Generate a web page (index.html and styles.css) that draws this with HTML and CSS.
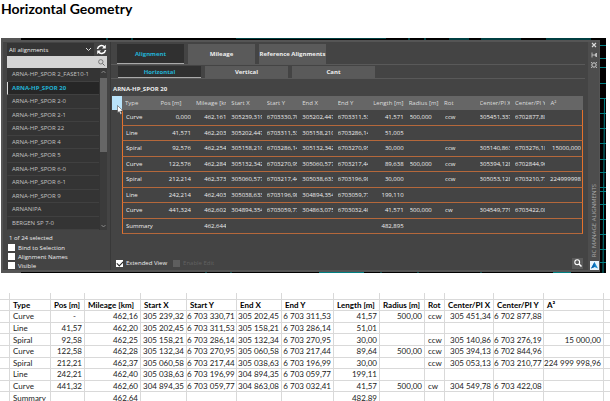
FILE: index.html
```html
<!DOCTYPE html>
<html lang="en">
<head>
<meta charset="utf-8">
<title>Horizontal Geometry</title>
<link rel="stylesheet" href="styles.css">
</head>
<body>
<h1>Horizontal Geometry</h1>
<section class="scene">
  <svg class="drawing" aria-hidden="true">
    <rect width="20" height="100%" fill="#555"/>
    <g stroke="#007f82" fill="none">
      <path d="M106 0v2M131 0v2M235 0h150M408 0v2M424 0v2M448 1h20M480 1h40M545 1h45"/>
      <path d="M205 233.500v2M230 233.500v2M318 234.500h45M380 233v2M417 233v2M480 233v2M552 234.500h18"/>
    </g>
    <svg x="100%" overflow="visible"><g stroke="#007f82"><path d="M-6 7.500h6M-6 20.500h6M-6 29.500h6M-6 45.500h6M-6 60.500h6M-6 75.500h6M-6 90.500h6M-6 105.500h6M-6 121.500h6M-6 134.500h6M-6 149.500h6M-6 153.500h6M-6 166.500h6M-6 181.500h6M-6 196.500h6M-6 211.500h6M-6 224.500h6M-1.500 60L-3 235"/></g></svg>
  </svg>
  <div class="palette">
    <aside class="side">
      <div class="picker">
        <label class="combo"><select aria-label="Alignment filter"><option>All alignments</option></select>
          <svg width="7" height="5" viewBox="0 0 7 5"><path d="M1 1l2.500 2.500L6 1" fill="none" stroke="#ddd"/></svg></label>
        <button class="icon" aria-label="Refresh"><svg width="11" height="11" viewBox="0 0 11 11"><path d="M1.500 5A4 4 0 0 1 8.500 3M9.500 6A4 4 0 0 1 2.500 8" fill="none" stroke="#fff" stroke-width="1.600"/><path d="M9.800 .8v3.700H6zM1.200 10.200V6.500H5z" fill="#fff"/></svg></button>
      </div>
      <label class="search"><input type="text" aria-label="Search alignments">
        <svg width="7" height="7" viewBox="0 0 7 7"><circle cx="2.800" cy="2.800" r="2.200" fill="none" stroke="#666" stroke-width=".8"/><path d="M4.500 4.500L6.600 6.600" stroke="#666"/></svg></label>
      <div class="listbox">
        <ul class="list">
          <li>ARNA-HP_SPOR 2_FASE10-1</li><li class="selected">ARNA-HP_SPOR 20</li><li>ARNA-HP_SPOR 2-0</li><li>ARNA-HP_SPOR 2-1</li><li>ARNA-HP_SPOR 22</li><li>ARNA-HP_SPOR 4</li><li>ARNA-HP_SPOR 5</li><li>ARNA-HP_SPOR 6-0</li><li>ARNA-HP_SPOR 6-1</li><li>ARNA-HP_SPOR 9</li><li>ARNANIPA</li><li>BERGEN SP 7-0</li>
        </ul>
        <div class="scroll">
          <svg width="5" height="4" viewBox="0 0 5 4"><path d="M.5 3l2-2 2 2" fill="none" stroke="#999" stroke-width=".8"/></svg>
          <div class="thumb"></div>
          <svg width="5" height="4" viewBox="0 0 5 4"><path d="M.5 1l2 2 2-2" fill="none" stroke="#999" stroke-width=".8"/></svg>
        </div>
      </div>
      <p class="count">1 of 24 selected</p>
      <div class="options">
        <label class="check"><input type="checkbox">Bind to Selection</label>
        <label class="check"><input type="checkbox">Alignment Names</label>
        <label class="check"><input type="checkbox">Visible</label>
      </div>
    </aside>
    <main class="main">
      <nav class="tabs"><button class="on">Alignment</button><button>Mileage</button><button>Reference Alignments</button></nav>
      <nav class="tabs sub"><button class="on">Horizontal</button><button>Vertical</button><button>Cant</button></nav>
      <h2>ARNA-HP_SPOR 20</h2>
      <div class="gridwrap">
        <div class="corner"><svg class="cursor" width="7" height="10" viewBox="0 0 7 10"><path d="M.5 .5v7.500l1.700-1.600 1.300 3 1.300-.6-1.200-2.800h2.500z" fill="#fff" stroke="#333" stroke-width=".5"/></svg></div>
        <table class="elements">
          <thead><tr><th>Type</th><th>Pos [m]</th><th>Mileage [km]</th><th>Start X</th><th>Start Y</th><th>End X</th><th>End Y</th><th>Length [m]</th><th>Radius [m]</th><th>Rot</th><th>Center/PI X</th><th>Center/PI Y</th><th>A²</th></tr></thead>
          <tbody>
            <tr><td>Curve</td><td>0,000</td><td>462,161</td><td>305239,319</td><td>6703330,705</td><td>305202,447</td><td>6703311,532</td><td>41,571</td><td>500,000</td><td>ccw</td><td>305451,337</td><td>6702877,882</td><td></td></tr>
            <tr><td>Line</td><td>41,571</td><td>462,203</td><td>305202,447</td><td>6703311,532</td><td>305158,210</td><td>6703286,143</td><td>51,005</td><td></td><td></td><td></td><td></td><td></td></tr>
            <tr><td>Spiral</td><td>92,576</td><td>462,254</td><td>305158,210</td><td>6703286,143</td><td>305132,342</td><td>6703270,951</td><td>30,000</td><td></td><td>ccw</td><td>305140,863</td><td>6703276,187</td><td>15000,000</td></tr>
            <tr><td>Curve</td><td>122,576</td><td>462,284</td><td>305132,342</td><td>6703270,951</td><td>305060,577</td><td>6703217,443</td><td>89,638</td><td>500,000</td><td>ccw</td><td>305394,128</td><td>6702844,962</td><td></td></tr>
            <tr><td>Spiral</td><td>212,214</td><td>462,373</td><td>305060,577</td><td>6703217,443</td><td>305038,633</td><td>6703196,988</td><td>30,000</td><td></td><td>ccw</td><td>305053,128</td><td>6703210,772</td><td>224999998</td></tr>
            <tr><td>Line</td><td>242,214</td><td>462,403</td><td>305038,633</td><td>6703196,988</td><td>304894,354</td><td>6703059,772</td><td>199,110</td><td></td><td></td><td></td><td></td><td></td></tr>
            <tr><td>Curve</td><td>441,324</td><td>462,602</td><td>304894,354</td><td>6703059,772</td><td>304863,075</td><td>6703032,406</td><td>41,571</td><td>500,000</td><td>cw</td><td>304549,779</td><td>6703422,084</td><td></td></tr>
            <tr><td>Summary</td><td></td><td>462,644</td><td></td><td></td><td></td><td></td><td>482,895</td><td></td><td></td><td></td><td></td><td></td></tr>
          </tbody>
        </table>
      </div>
      <footer>
        <label class="check"><input type="checkbox" checked>Extended View</label>
        <label class="check off"><input type="checkbox" disabled>Enable Edit</label>
        <button class="icon find" aria-label="Find"><svg width="8" height="8" viewBox="0 0 8 8"><circle cx="3.200" cy="3.200" r="2.400" fill="none" stroke="#fff" stroke-width="1.100"/><path d="M5 5l2.500 2.500" stroke="#fff" stroke-width="1.500"/></svg></button>
      </footer>
    </main>
    <div class="rail">
      <button class="icon" aria-label="Close"><svg width="6" height="6" viewBox="0 0 6 6"><path d="M1 1l4 4M5 1L1 5" stroke="#ddd" stroke-width="1.100"/></svg></button>
      <button class="icon" aria-label="Auto-hide"><svg width="6" height="6" viewBox="0 0 6 6"><path d="M1 .5v5M1 3h2M5.500 1v4L3.500 3z" stroke="#ccc" stroke-width=".8" fill="#ccc"/></svg></button>
      <button class="icon" aria-label="Properties"><svg width="6" height="6" viewBox="0 0 6 6"><path d="M1.200 1.200h3.600v3.600H1.200zM0 0l1.200 1.200M6 0L4.800 1.200M0 6l1.200-1.200M6 6L4.800 4.800M0 3h1M5 3h1M3 0v1M3 5v1" fill="none" stroke="#ccc" stroke-width=".8"/></svg></button>
      <span class="caption">RC MANAGE ALIGNMENTS</span>
      <svg width="9" height="9" viewBox="0 0 9 9"><path d="M0 0h9v9H0z" fill="#e8f5fc"/><path d="M4.500 1L8 7.500 4.500 6 1 7.500z" fill="#138bd0"/><path d="M4.500 1v5L1 7.500z" fill="#0a62ac"/></svg>
    </div>
  </div>
</section>
<table class="sheet">
  <colgroup><col class="w9"><col class="w41"><col class="w34"><col class="w56"><col class="w46"><col class="w50"><col class="w45"><col class="w52"><col class="w46"><col class="w45"><col class="w20"><col class="w49"><col class="w50"><col class="w60"><col class="w7"></colgroup>
  <thead>
    <tr class="blank"><td></td><td></td><td></td><td></td><td></td><td></td><td></td><td></td><td></td><td></td><td></td><td></td><td></td><td></td><td></td></tr>
    <tr><td></td><th>Type</th><th>Pos [m]</th><th>Mileage [km]</th><th>Start X</th><th>Start Y</th><th>End X</th><th>End Y</th><th>Length [m]</th><th>Radius [m]</th><th>Rot</th><th>Center/PI X</th><th>Center/PI Y</th><th>A²</th><td></td></tr>
  </thead>
  <tbody>
    <tr><td></td><td>Curve</td><td class="dash">-</td><td>462,16</td><td>305 239,32</td><td>6 703 330,71</td><td>305 202,45</td><td>6 703 311,53</td><td>41,57</td><td>500,00</td><td>ccw</td><td>305 451,34</td><td>6 702 877,88</td><td></td><td></td></tr>
    <tr><td></td><td>Line</td><td>41,57</td><td>462,20</td><td>305 202,45</td><td>6 703 311,53</td><td>305 158,21</td><td>6 703 286,14</td><td>51,01</td><td></td><td></td><td></td><td></td><td></td><td></td></tr>
    <tr><td></td><td>Spiral</td><td>92,58</td><td>462,25</td><td>305 158,21</td><td>6 703 286,14</td><td>305 132,34</td><td>6 703 270,95</td><td>30,00</td><td></td><td>ccw</td><td>305 140,86</td><td>6 703 276,19</td><td>15 000,00</td><td></td></tr>
    <tr><td></td><td>Curve</td><td>122,58</td><td>462,28</td><td>305 132,34</td><td>6 703 270,95</td><td>305 060,58</td><td>6 703 217,44</td><td>89,64</td><td>500,00</td><td>ccw</td><td>305 394,13</td><td>6 702 844,96</td><td></td><td></td></tr>
    <tr><td></td><td>Spiral</td><td>212,21</td><td>462,37</td><td>305 060,58</td><td>6 703 217,44</td><td>305 038,63</td><td>6 703 196,99</td><td>30,00</td><td></td><td>ccw</td><td>305 053,13</td><td>6 703 210,77</td><td>224 999 998,96</td><td></td></tr>
    <tr><td></td><td>Line</td><td>242,21</td><td>462,40</td><td>305 038,63</td><td>6 703 196,99</td><td>304 894,35</td><td>6 703 059,77</td><td>199,11</td><td></td><td></td><td></td><td></td><td></td><td></td></tr>
    <tr><td></td><td>Curve</td><td>441,32</td><td>462,60</td><td>304 894,35</td><td>6 703 059,77</td><td>304 863,08</td><td>6 703 032,41</td><td>41,57</td><td>500,00</td><td>cw</td><td>304 549,78</td><td>6 703 422,08</td><td></td><td></td></tr>
    <tr><td></td><td>Summary</td><td></td><td>462,64</td><td></td><td></td><td></td><td></td><td>482,89</td><td></td><td></td><td></td><td></td><td></td><td></td></tr>
  </tbody>
</table>
</body>
</html>
```
FILE: styles.css
```css
* { box-sizing: border-box; }
html { overflow: hidden; }
body { margin: 0; background: #fff; font-family: Lato, "Liberation Sans", sans-serif; }
h1 { margin: 0; padding: 0 1px; font-size: 14px; line-height: 18px; font-weight: 700; color: #000; }
ul, p, h2 { margin: 0; padding: 0; list-style: none; }
button, input, select { font: inherit; color: inherit; margin: 0; padding: 0; border: 0; border-radius: 0; }
svg { display: block; flex: none; }

.scene {
  position: relative; margin: 20px 4px 0 1px; padding: 2px 6px 1px 0; background: #000;
  font-family: "Open Sans", "Noto Sans", sans-serif; font-size: 6px; line-height: 8px; color: #eee;
}
.drawing { position: absolute; inset: 0; width: 100%; height: 100%; }
.palette {
  position: relative; display: grid; grid-template-columns: 104px 1fr 11px; column-gap: 3px;
  background: #444; border: 2px solid #555; border-width: 2px 1px 2px 2px; height: 232px;
}

.side { padding: 1px 0 0 4px; display: flex; flex-direction: column; }
.picker { display: flex; height: 13px; gap: 2px; align-items: center; }
.combo { position: relative; flex: 1; display: flex; align-items: center; background: #353535; height: 13px; }
.combo select { appearance: none; width: 100%; background: transparent; padding-left: 2px; }
.combo svg { position: absolute; right: 2px; }
.icon { display: grid; place-items: center; background: transparent; }
.search { display: flex; align-items: center; height: 12px; background: #d4d4d4; padding-right: 2px; }
.search input { flex: 1; min-width: 0; background: transparent; color: #222; }
.listbox { display: grid; grid-template-columns: 1fr 7px; column-gap: 1px; height: 162px; background: #343434; }
.list { display: grid; grid-template-rows: repeat(12, 1fr); color: #c2c2c2; }
.list li { display: flex; align-items: center; padding-left: 4px; border-left: 1px solid transparent; border-bottom: 1px solid #404040; white-space: nowrap; }
.list .selected { background: #262626; border-left-color: #ddd; color: #22b2d4; font-weight: 700; }
.scroll { display: flex; flex-direction: column; align-items: center; gap: 4px; padding: 2px 0; background: #3b3b3b; }
.thumb { width: 7px; height: 74px; background: #666; margin-bottom: auto; }
.count { padding: 4px 2px 0; line-height: 8px; }
.options { padding: 1px 0 0 1px; }
.check { display: flex; align-items: center; gap: 3px; height: 9px; white-space: nowrap; }
.check input { appearance: none; width: 7px; height: 7px; background: #fff; display: grid; place-items: center; }
.check input:checked::before { content: ""; width: 5px; height: 3px; border: solid #222; border-width: 0 0 1px 1px; transform: rotate(-45deg); }
.check.off { color: #626262; }
.check.off input { background: #5e5e5e; }

.main { display: flex; flex-direction: column; border-left: 1px solid #383838; min-width: 0; }
.tabs { display: flex; gap: 4px; height: 23px; padding: 2px 6px 0; border-bottom: 1px solid #595959; }
.tabs button { flex: 0 1 67px; height: 20px; background: #5a5a5a; font-weight: 700; color: #eee; white-space: nowrap; }
.tabs .on { background: #303030; color: #22b2d4; border-bottom: 1px solid #aaa; }
.tabs.sub { height: 14px; padding: 1px 7px 0; }
.tabs.sub button { flex-basis: 83px; height: 12px; }
h2 { font-size: 6px; font-weight: 700; line-height: 10px; padding: 5px 2px 2px; }
.gridwrap { display: grid; grid-template-columns: 10px 1fr; padding: 0 2px 0 1px; }
.corner { position: relative; height: 14px; background: #b9e3fa; }
.cursor { position: absolute; left: 5px; top: 9px; z-index: 1; }
.elements { width: 100%; height: 138px; border-spacing: 0; table-layout: fixed; }
.elements th { height: 14px; background: #666; color: #ddd; font-weight: 400; text-align: left; }
.elements th, .elements td { padding: 0 2px 0 3px; white-space: nowrap; overflow: clip; overflow-clip-margin: content-box; }
.elements td { border-bottom: 1px solid #b5683b; }
.elements td:first-child { border-left: 1px solid #e5722c; }
.elements td:last-child { border-right: 1px solid #e5722c; padding: 0 1px; text-align: right; }
.elements td:nth-child(2), .elements td:nth-child(3), .elements td:nth-child(8) { text-align: right; }
.elements td:nth-child(9), .elements td:nth-child(10) { padding-left: 4px; }
footer { display: flex; align-items: center; gap: 6px; margin-top: auto; padding: 0 2px 1px 5px; height: 13px; }
.find { margin-left: auto; width: 11px; height: 11px; background: #5a5a5a; }

.rail { display: flex; flex-direction: column; align-items: center; gap: 4px; background: #4d4d4d; padding: 0 0 0 1px; }
.rail .icon { height: 6px; }
.caption { writing-mode: vertical-rl; transform: rotate(180deg); margin-top: auto; color: #aaa; white-space: nowrap; }

.sheet { width: 100%; height: 111px; margin-top: 20px; border-spacing: 0; table-layout: fixed; font-size: 8px; line-height: 10px; color: #222; }
.sheet td, .sheet th { padding: 0 2px 0 3px; border-right: 1px solid #d9d9d9; border-bottom: 1px solid #d9d9d9; white-space: nowrap; text-align: right; }
.sheet th { text-align: left; font-weight: 700; color: #000; }
.sheet td { padding-left: 0; }
.sheet td:nth-child(2), .sheet td:nth-child(11) { padding-left: 3px; text-align: left; }
.sheet .dash { padding-right: 8px; }
.sheet .blank td { height: 7px; }
.w7 { width: 7px; } .w9 { width: 10px; } .w20 { width: 20px; } .w34 { width: 34px; }
.w41 { width: 41px; } .w45 { width: 45px; } .w46 { width: 46px; } .w49 { width: 49px; }
.w50 { width: 50px; } .w52 { width: 52px; } .w56 { width: 56px; } .w60 { width: 60px; }
```
